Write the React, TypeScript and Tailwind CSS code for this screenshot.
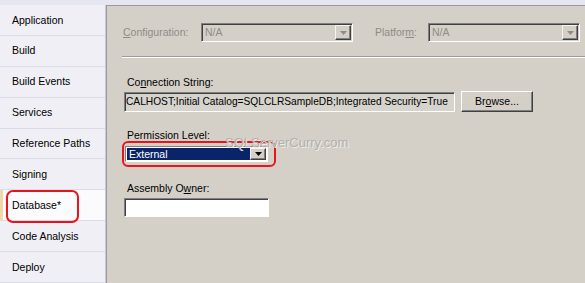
import React from 'react';

const sidebarItems = [
  'Application',
  'Build',
  'Build Events',
  'Services',
  'Reference Paths',
  'Signing',
  'Database*',
  'Code Analysis',
  'Deploy',
];

const sunken =
  'border border-t-[#808080] border-l-[#808080] border-b-white border-r-white shadow-[inset_1px_1px_0_#404040]';

const Arrow: React.FC<{ color: string }> = ({ color }) => (
  <svg width="7" height="4" viewBox="0 0 7 4">
    <path d="M0 0h7L3.5 4z" fill={color} />
  </svg>
);

const DropButton: React.FC<{ disabled?: boolean }> = ({ disabled }) => (
  <div className="w-[16px] h-full flex items-center justify-center bg-[#d4d0c8] border border-t-[#f4f3ee] border-l-[#f4f3ee] border-b-[#404040] border-r-[#404040] shadow-[inset_-1px_-1px_0_#808080]">
    <Arrow color={disabled ? '#8e8c86' : '#000000'} />
  </div>
);

const DisabledCombo: React.FC = () => (
  <div className={`w-[152px] h-[19px] flex ${sunken} bg-[#d4d0c8] p-[1px]`}>
    <div className="flex-1 pl-[2px] text-[#8e8c86] leading-[15px]">N/A</div>
    <DropButton disabled />
  </div>
);

const Sidebar: React.FC = () => (
  <div className="relative w-[106px] flex flex-col bg-[#efeff5] border-r border-[#c8c8d8]">
    {sidebarItems.map((item) => {
      const active = item === 'Database*';
      return (
        <div
          key={item}
          className={`h-[31px] flex items-center pl-[12px] pt-[1px] border-b border-[#dcdce6] ${
            active ? 'bg-[#fbfafc] shadow-[inset_3px_0_0_#f0d8a8]' : ''
          }`}
        >
          {item}
        </div>
      );
    })}
    <div className="absolute left-[6px] top-[185px] w-[73px] h-[33px] rounded-[7px] border-2 border-[#e8141c]" />
  </div>
);

export default function App() {
  return (
    <div
      className="w-[585px] h-[283px] flex flex-col overflow-hidden bg-[#e6e6f0] text-[10.5px] text-black"
      style={{ fontFamily: '"Liberation Sans", Arial, sans-serif' }}
    >
      <div className="h-[5px] bg-[#e6e6f0]" />
      <div className="flex flex-1 min-h-0">
        <Sidebar />
        <div className="relative flex-1 bg-[#d4d0c8] border-l border-t border-[#9a9aa6] pt-[17px]">
          <div className="flex items-center pl-[16px]">
            <div className="w-[78px] text-[#8e8c86]">
              <span className="underline">C</span>onfiguration:
            </div>
            <DisabledCombo />
            <div className="w-[53px] ml-[22px] text-[#8e8c86]">
              Platfor<span className="underline">m</span>:
            </div>
            <DisabledCombo />
          </div>

          <div className="ml-[15px] mt-[14px] h-[2px] border-t border-[#a09e98] border-b border-b-white" />

          <div className="pl-[17px] pt-[18px]">
            <div className="pl-[3px] leading-[13px]">
              Co<span className="underline">n</span>nection String:
            </div>
            <div className="flex items-center mt-[2px]">
              <div className={`w-[331px] h-[20px] ${sunken} bg-[#d6d3cc] overflow-hidden whitespace-nowrap pl-[1px] leading-[17px] text-[10.2px]`}>
                CALHOST;Initial Catalog=SQLCLRSampleDB;Integrated Security=True
              </div>
              <div className="ml-[6px] w-[72px] h-[21px] flex items-center justify-center bg-[#d4d0c8] border border-t-white border-l-white border-b-[#404040] border-r-[#404040] shadow-[inset_-1px_-1px_0_#808080]">
                Br<span className="underline">o</span>wse...
              </div>
            </div>

            <div className="pl-[3px] mt-[17px] leading-[13px]">Permission Level:</div>
            <div className="relative mt-[4px] w-[143px] h-[16px] ml-[1px] flex bg-white border border-t-[#808080] border-l-[#808080] border-b-white border-r-white p-[1px]">
              <div className="flex-1 bg-[#0a246a] text-white pl-[2px] leading-[12px]">External</div>
              <DropButton />
              <div className="absolute -left-[4px] -top-[6px] w-[154px] h-[26px] rounded-[6px] border-2 border-[#e8141c]" />
            </div>

            <div className="pl-[3px] mt-[20px] leading-[13px]">
              Assembly O<span className="underline">w</span>ner:
            </div>
            <div className={`mt-[3px] w-[145px] h-[19px] ${sunken} bg-white`} />
          </div>

          <div className="absolute left-[118px] top-[127px] text-[13px] text-[#b3b1ab] [text-shadow:1px_1px_0_#ecebe7]">
            SQLServerCurry.com
          </div>
        </div>
      </div>
    </div>
  );
}
